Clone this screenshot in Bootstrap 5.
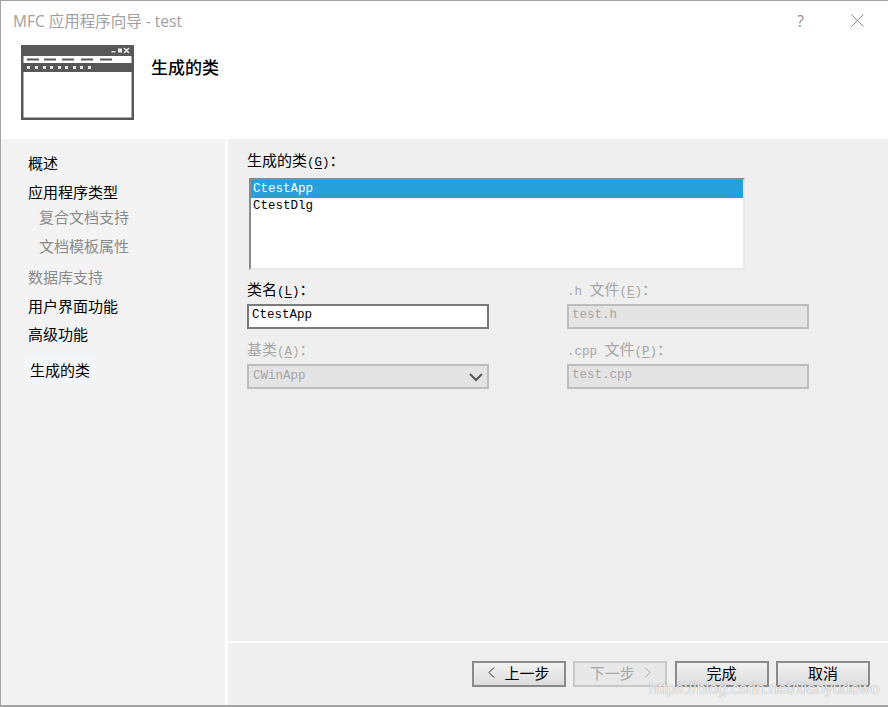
<!DOCTYPE html>
<html lang="zh-CN">
<head>
  <meta charset="UTF-8" />
  <title>MFC 应用程序向导 - test</title>
  <meta name="viewport" content="width=device-width, initial-scale=1" />
  <link href="https://cdn.jsdelivr.net/npm/bootstrap@5.3.0/dist/css/bootstrap.min.css" rel="stylesheet" />
  <style>
    html, body { height: 100%; }
    body { background: #fff; font-family: "Noto Sans CJK SC", "Liberation Sans", sans-serif; font-size: 15px; color: #000; overflow: hidden; }
    .mono { font-family: "Liberation Mono", "Noto Sans CJK SC", monospace; font-size: 12.5px; }
    .wiz-window { position: relative; width: 888px; height: 707px; border-top: 1px solid #a3a3a3; border-left: 1px solid #a3a3a3; border-bottom: 2px solid #a3a3a3; background: #fff; }
    .wiz-title { height: 34px; padding: 10px 24px 0 12px; color: #a0a0a0; font-size: 15.5px; line-height: 20px; font-family: "Open Sans", "Noto Sans CJK SC", sans-serif; }
    .wiz-title-btns { padding-top: 3px; gap: 47px; }
    .wiz-help { color: #8f8f8f; font-size: 16px; line-height: 15px; }
    .wiz-head { height: 104px; padding: 10px 0 0 20px; gap: 17px; }
    .wiz-heading { font-size: 17px; line-height: 24px; margin-top: 10px; font-weight: 500; }
    .wiz-main { height: 566px; gap: 3px; }
    .wiz-side { width: 224px; background: #f3f3f3; padding: 14px 0 0 27px; }
    .wiz-step { height: 20px; line-height: 20px; }
    .wiz-step.off { color: #8a8a8a; }
    .wiz-step.sub { color: #8a8a8a; padding-left: 11px; }
    .step-a { margin-bottom: 9px; }
    .step-b { margin-bottom: 5px; }
    .step-c { margin-bottom: 9px; }
    .step-d { margin-bottom: 11px; }
    .step-e { margin-bottom: 9px; }
    .step-f { margin-bottom: 8px; }
    .step-g { margin-bottom: 13px; }
    .step-now { width: 70px; height: 27px; line-height: 25px; margin-left: -3px; padding-left: 5px; background: #f2f5fa; }
    .wiz-right { width: 660px; background: #efefef; }
    .wiz-body { height: 502px; padding: 11px 0 0 19px; }
    .wiz-label { height: 20px; line-height: 20px; white-space: nowrap; }
    .wiz-label u { text-underline-offset: 2px; }
    .wiz-label.off { color: #a6a6a6; }
    .wiz-list { width: 496px; height: 92px; margin: 8px 0 9px 2px; border: 2px solid #8a8a8a; border-right-color: #e8e8e8; border-bottom-color: #e8e8e8; background: #fff; border-radius: 0; padding: 0; }
    .wiz-list .list-group-item { border: 0; border-radius: 0; padding: 0 2px; height: 17px; line-height: 17px; background: transparent; color: #000; }
    .wiz-list .list-group-item.active { background: #26a0da; color: #fff; height: 18px; line-height: 18px; }
    .wiz-cols { width: 562px; column-gap: 78px; row-gap: 10px; display: grid; grid-template-columns: 242px 242px; }
    .wiz-cols .form-control, .wiz-cols .form-select { width: 242px; height: 25px; min-height: 25px; margin-top: 5px; padding: 0 3px 4px; border-radius: 0; line-height: 17px; box-shadow: none; }
    .wiz-cols .form-control { border: 2px solid #7a7a7a; background: #fff; color: #000; }
    .wiz-cols .form-control:disabled { border: 2px solid #bdbdbd; background: #e4e4e4; color: #a6a6a6; opacity: 1; }
    .wiz-cols .form-select:disabled { border: 2px solid #bdbdbd; background-color: #e4e4e4; color: #a6a6a6; padding: 0 0 0 4px; line-height: 19px; background-size: 16px 12px; background-position: right 3px center; opacity: 1; background-image: url("data:image/svg+xml,%3csvg xmlns='http://www.w3.org/2000/svg' viewBox='0 0 16 12'%3e%3cpath fill='none' stroke='%235a5a5a' stroke-width='2' d='M2 3l6 6 6-6'/%3e%3c/svg%3e"); }
    .wiz-foot { height: 62px; border-top: 2px solid #fff; padding: 18px 0 0 244px; gap: 7.3px; }
    .wiz-btn { width: 94px; height: 26px; padding: 0 0 3px; line-height: 20px; font-size: 15px; border-radius: 0; border: 2px solid #8a8a8a; color: #000; background: linear-gradient(#f2f2f2, #dcdcdc); gap: 9px; }
    .wiz-btn:disabled { border-color: #c8c8c8; color: #a6a6a6; background: #e8e8e8; opacity: 1; }
    .wiz-mark { position: absolute; left: 648px; top: 679px; font-family: "Liberation Sans", sans-serif; font-size: 15.9px; line-height: 18px; color: rgba(255,255,255,.85); text-shadow: 0 0 1px rgba(110,110,110,.75); white-space: nowrap; }
  </style>
</head>
<body>
  <div class="wiz-window">
    <div class="d-flex justify-content-between wiz-title">
      <div>MFC 应用程序向导 - test</div>
      <div class="d-flex wiz-title-btns">
        <span class="wiz-help">?</span>
        <svg width="13" height="13" viewBox="0 0 13 13"><path d="M.5.5l12 12M12.5.5l-12 12" stroke="#8f8f8f" stroke-width="1" fill="none"/></svg>
      </div>
    </div>

    <div class="d-flex wiz-head">
      <svg width="113" height="75" viewBox="0 0 113 75" class="flex-shrink-0">
        <rect width="113" height="75" fill="#585858"/>
        <rect x="2.5" y="11" width="108" height="7" fill="#fff"/>
        <rect x="2.5" y="27" width="108" height="45.5" fill="#fff"/>
        <g fill="#585858">
          <rect x="6" y="13.5" width="12" height="2"/><rect x="23" y="13.5" width="12" height="2"/><rect x="41" y="13.5" width="12" height="2"/><rect x="60" y="13.5" width="12" height="2"/><rect x="79" y="13.5" width="12" height="2"/>
        </g>
        <g fill="#e6e6e6">
          <rect x="6" y="21" width="3" height="3"/><rect x="14" y="21" width="3" height="3"/><rect x="22" y="21" width="3" height="3"/><rect x="29" y="21" width="3" height="3"/><rect x="37" y="21" width="3" height="3"/><rect x="44" y="21" width="3" height="3"/><rect x="52" y="21" width="3" height="3"/><rect x="59" y="21" width="3" height="3"/><rect x="67" y="21" width="3" height="3"/>
        </g>
        <rect x="90.5" y="6" width="4" height="1.5" fill="#ddd"/>
        <rect x="97" y="3.5" width="4" height="4" fill="#eee"/>
        <path d="M103 3l5 5M108 3l-5 5" stroke="#eee" stroke-width="1.5"/>
      </svg>
      <div class="wiz-heading">生成的类</div>
    </div>

    <div class="d-flex wiz-main">
      <div class="wiz-side">
        <div class="wiz-step step-a">概述</div>
        <div class="wiz-step step-b">应用程序类型</div>
        <div class="wiz-step sub step-c">复合文档支持</div>
        <div class="wiz-step sub step-d">文档模板属性</div>
        <div class="wiz-step off step-e">数据库支持</div>
        <div class="wiz-step step-f">用户界面功能</div>
        <div class="wiz-step step-g">高级功能</div>
        <div class="wiz-step step-now">生成的类</div>
      </div>

      <div class="wiz-right">
        <div class="wiz-body">
          <div class="wiz-label">生成的类<span class="mono">(<u>G</u>)</span>：</div>
          <div class="list-group wiz-list mono">
            <div class="list-group-item active">CtestApp</div>
            <div class="list-group-item">CtestDlg</div>
          </div>
          <div class="wiz-cols">
            <div>
              <div class="wiz-label">类名<span class="mono">(<u>L</u>)</span>：</div>
              <input class="form-control mono" type="text" value="CtestApp" />
            </div>
            <div>
              <div class="wiz-label off"><span class="mono">.h </span>文件<span class="mono">(<u>E</u>)</span>：</div>
              <input class="form-control mono" type="text" value="test.h" disabled />
            </div>
            <div>
              <div class="wiz-label off">基类<span class="mono">(<u>A</u>)</span>：</div>
              <select class="form-select mono" disabled><option>CWinApp</option></select>
            </div>
            <div>
              <div class="wiz-label off"><span class="mono">.cpp </span>文件<span class="mono">(<u>P</u>)</span>：</div>
              <input class="form-control mono" type="text" value="test.cpp" disabled />
            </div>
          </div>
        </div>
        <div class="d-flex wiz-foot">
          <button type="button" class="btn wiz-btn d-inline-flex align-items-center justify-content-center">
            <svg width="7" height="11" viewBox="0 0 7 11"><path d="M6 .5l-5 5 5 5" fill="none" stroke="#333" stroke-width="1"/></svg>
            <span>上一步</span>
          </button>
          <button type="button" class="btn wiz-btn d-inline-flex align-items-center justify-content-center" disabled>
            <span>下一步</span>
            <svg width="7" height="11" viewBox="0 0 7 11"><path d="M1 .5l5 5-5 5" fill="none" stroke="#a6a6a6" stroke-width="1"/></svg>
          </button>
          <button type="button" class="btn wiz-btn">完成</button>
          <button type="button" class="btn wiz-btn">取消</button>
        </div>
      </div>
    </div>
    <div class="wiz-mark">https://blog.csdn.net/xianyudewo</div>
  </div>
  <script src="https://cdn.jsdelivr.net/npm/bootstrap@5.3.0/dist/js/bootstrap.bundle.min.js"></script>
</body>
</html>
